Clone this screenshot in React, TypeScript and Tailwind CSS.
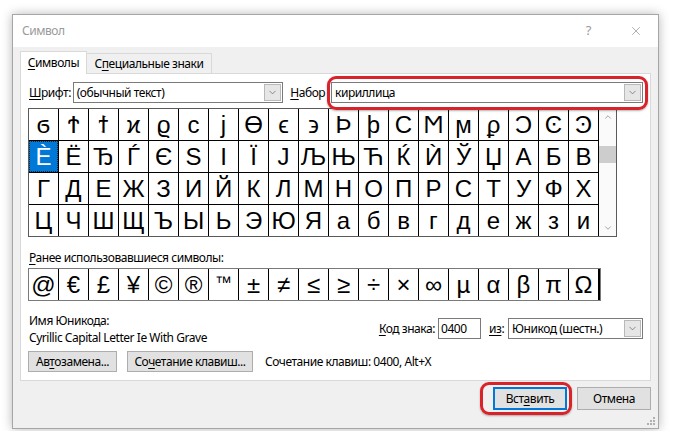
import { ChevronDown, ChevronUp, X } from 'lucide-react';

const GRID_ROWS = [
  'ϭϮϯϰϱϲϳϴϵ϶ϷϸϹϺϻϼϽϾϿ',
  'ЀЁЂЃЄЅІЇЈЉЊЋЌЍЎЏАБВ',
  'ГДЕЖЗИЙКЛМНОПРСТУФХ',
  'ЦЧШЩЪЫЬЭЮЯабвгдежзи',
];

const RECENT = '@€£¥©®™±≠≤≥÷×∞µαβπΩ';

function Combo({ value, width }: { value: string; width: string }) {
  return (
    <div className={`${width} h-[21px] border border-[#7a7a7a] bg-white flex items-stretch`}>
      <div className="flex-1 flex items-center pl-[3px] overflow-hidden whitespace-nowrap">{value}</div>
      <div className="m-px w-[17px] bg-[#e6e6e6] border border-[#b9b9b9] flex items-center justify-center">
        <ChevronDown size={11} strokeWidth={1.5} className="text-[#606060]" />
      </div>
    </div>
  );
}

function Btn({ children, width }: { children: React.ReactNode; width: string }) {
  return (
    <div className={`${width} h-[21px] bg-[#e1e1e1] border border-[#adadad] flex items-center justify-center`}>
      {children}
    </div>
  );
}

export default function App() {
  return (
    <div className="w-[673px] h-[431px] bg-white pt-[14px] pl-[12px] font-['Noto_Sans',sans-serif] text-[12px] tracking-[-0.45px] text-black">
      <div className="relative w-[647px] h-[415px] border border-[#a6a6a6] shadow-[0_0_10px_rgba(0,0,0,0.28)] bg-[#f0f0f0] flex flex-col">
        {/* title bar */}
        <div className="h-[32px] bg-white flex items-center pl-[9px] pr-[15px] text-[#9a9a9a]">
          <span>Символ</span>
          <span className="ml-auto text-[13px]">?</span>
          <X size={14} strokeWidth={1} className="ml-[38px] text-[#777]" />
        </div>

        <div className="flex-1 px-[7px] pt-[4px] flex flex-col">
          {/* tabs */}
          <div className="flex items-end h-[23px] -mb-px relative z-10">
            <div className="h-[23px] w-[67px] bg-white border border-b-0 border-[#d9d9d9] flex items-center justify-center">
              <span>
                <span className="underline underline-offset-2">С</span>имволы
              </span>
            </div>
            <div className="h-[20px] w-[125px] mb-px bg-[#f0f0f0] border border-b-0 border-l-0 border-[#d9d9d9] flex items-center justify-center">
              <span>
                С<span className="underline underline-offset-2">п</span>ециальные знаки
              </span>
            </div>
          </div>

          {/* tab panel */}
          <div className="h-[308px] bg-white border border-[#d9d9d9] px-[7px] pt-[8px] flex flex-col">
            <div className="flex items-center h-[21px]">
              <span className="w-[45px] pl-px">
                <span className="underline underline-offset-2">Ш</span>рифт:
              </span>
              <Combo value="(обычный текст)" width="w-[212px]" />
              <span className="ml-[7px] w-[41px]">
                <span className="underline underline-offset-2">Н</span>абор
              </span>
              <div className="relative">
                <Combo value="кириллица" width="w-[312px]" />
                <div className="absolute -left-[4px] -right-[5px] -top-[6px] -bottom-[7px] border-[3px] border-[#d8232a] rounded-[9px] shadow-[0_1px_2px_rgba(0,0,0,0.3)]" />
              </div>
            </div>

            {/* symbol grid */}
            <div className="mt-[5px] flex w-[589px] border border-[#5a5a5a]">
              <div className="grid grid-cols-[repeat(19,29px)] gap-px bg-black border-r border-black font-['Liberation_Sans','DejaVu_Sans',sans-serif] text-[24px] tracking-normal">
                {GRID_ROWS.flatMap((row, r) =>
                  Array.from(row).map((ch, c) => {
                    const selected = r === 1 && c === 0;
                    return (
                      <div
                        key={`${r}-${c}`}
                        className={`h-[31px] flex items-center justify-center leading-none ${
                          selected ? 'bg-[#0078d7] text-white border border-dotted border-[#222]' : 'bg-white'
                        }`}
                      >
                        {ch}
                      </div>
                    );
                  })
                )}
              </div>
              <div className="w-[17px] bg-[#fafafa] flex flex-col items-center">
                <ChevronUp size={10} strokeWidth={1.5} className="mt-[3px] text-[#707070]" />
                <div className="mt-[24px] w-full h-[17px] bg-[#cdcdcd]" />
                <ChevronDown size={10} strokeWidth={1.5} className="mt-auto mb-[3px] text-[#707070]" />
              </div>
            </div>

            <div className="mt-[13px] leading-[15px] pl-px">
              <span className="underline underline-offset-2">Р</span>анее использовавшиеся символы:
            </div>

            <div className="mt-[3px] w-[573px] grid grid-cols-[repeat(19,29px)] gap-px bg-black border border-[#7a7a7a] font-['Liberation_Sans','DejaVu_Sans',sans-serif] text-[24px] tracking-normal">
              {Array.from(RECENT).map((ch, i) =>
                ch === '™' ? (
                  <div key={i} className="h-[31px] bg-white flex justify-center pt-[5px] text-[17px] leading-none">
                    {ch}
                  </div>
                ) : (
                  <div key={i} className="h-[31px] bg-white flex items-center justify-center leading-none">
                    {ch}
                  </div>
                )
              )}
            </div>

            {/* unicode info */}
            <div className="mt-[11px] flex items-start">
              <div className="flex flex-col leading-[17px] pl-px">
                <span>Имя Юникода:</span>
                <span>Cyrillic Capital Letter Ie With Grave</span>
              </div>
              <div className="ml-auto mt-[6px] flex items-center">
                <span>
                  <span className="underline underline-offset-2">К</span>од знака:
                </span>
                <div className="ml-[3px] w-[43px] h-[21px] border border-[#7a7a7a] bg-white flex items-center pl-[2px]">
                  0400
                </div>
                <span className="ml-[8px] w-[19px]">
                  <span className="underline underline-offset-2">из</span>:
                </span>
                <Combo value="Юникод (шестн.)" width="w-[135px]" />
              </div>
            </div>

            <div className="mt-[5px] flex items-center">
              <Btn width="w-[89px]">
                <span>
                  Ав<span className="underline underline-offset-2">т</span>озамена...
                </span>
              </Btn>
              <div className="ml-[10px]">
                <Btn width="w-[126px]">
                  <span>
                    Со<span className="underline underline-offset-2">ч</span>етание клавиш...
                  </span>
                </Btn>
              </div>
              <span className="ml-[12px]">Сочетание клавиш: 0400, Alt+X</span>
            </div>
          </div>

          {/* dialog buttons */}
          <div className="mt-[6px] flex justify-end gap-[10px]">
            <div className="relative">
              <div className="w-[74px] h-[23px] bg-[#e1e1e1] border border-[#0078d7] shadow-[inset_0_0_0_1px_#0078d7] flex items-center justify-center">
                <span>
                  Вст<span className="underline underline-offset-2">а</span>вить
                </span>
              </div>
              <div className="absolute -left-[13px] -right-[5px] -top-[5px] -bottom-[5px] border-[3px] border-[#d8232a] rounded-[9px] shadow-[0_1px_2px_rgba(0,0,0,0.3)]" />
            </div>
            <div className="w-[74px] h-[23px] bg-[#e1e1e1] border border-[#adadad] flex items-center justify-center">
              Отмена
            </div>
          </div>
        </div>

        {/* resize grip */}
        <svg className="absolute right-[2px] bottom-[2px]" width="11" height="11" viewBox="0 0 11 11">
          {[
            [9, 3],
            [6, 6],
            [9, 6],
            [3, 9],
            [6, 9],
            [9, 9],
          ].map(([x, y], i) => (
            <rect key={i} x={x - 1} y={y - 1} width="2" height="2" fill="#b0b0b0" />
          ))}
        </svg>
      </div>
    </div>
  );
}
